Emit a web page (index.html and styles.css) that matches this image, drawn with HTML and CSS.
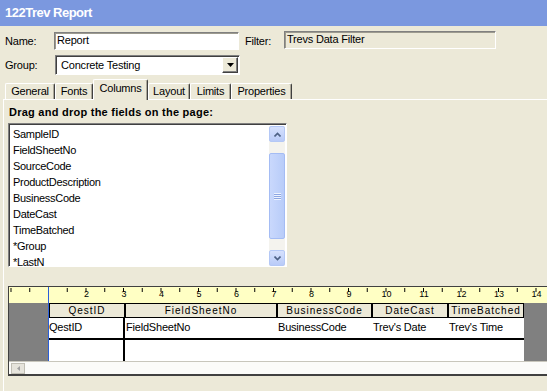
FILE: index.html
```html
<!DOCTYPE html>
<html>
<head>
<meta charset="utf-8">
<link rel="stylesheet" href="styles.css">
</head>
<body>
<div class="window">
  <div class="titlebar">122Trev Report</div>
  <div class="row row-name">
    <span class="lbl lbl-name">Name:</span>
    <div class="field field-name">Report</div>
    <span class="lbl lbl-filter">Filter:</span>
    <div class="field field-filter">Trevs Data Filter</div>
  </div>
  <div class="row row-group">
    <span class="lbl lbl-group">Group:</span>
    <div class="combo">
      <span class="combo-text">Concrete Testing</span>
      <span class="combo-btn"><svg width="7" height="4" viewBox="0 0 7 4"><path d="M0 0h7L3.5 4z" fill="#000"/></svg></span>
    </div>
  </div>
  <div class="tabs">
    <div class="tab t-general">General</div>
    <div class="tab t-fonts">Fonts</div>
    <div class="tab t-columns active">Columns</div>
    <div class="tab t-layout">Layout</div>
    <div class="tab t-limits">Limits</div>
    <div class="tab t-props">Properties</div>
  </div>
  <div class="panel">
    <div class="caption">Drag and drop the fields on the page:</div>
    <div class="listbox">
      <div class="items">
        <div class="item">SampleID</div>
        <div class="item">FieldSheetNo</div>
        <div class="item">SourceCode</div>
        <div class="item">ProductDescription</div>
        <div class="item">BusinessCode</div>
        <div class="item">DateCast</div>
        <div class="item">TimeBatched</div>
        <div class="item">*Group</div>
        <div class="item">*LastN</div>
      </div>
      <div class="vscroll">
        <div class="xpbtn up"><svg width="7" height="5" viewBox="0 0 7 5"><path d="M0.5 4.5L3.5 1.5L6.5 4.5" fill="none" stroke="#4d6185" stroke-width="1.6"/></svg></div>
        <div class="track-gap1"></div>
        <div class="thumb"><span class="grip"></span></div>
        <div class="track-gap2"></div>
        <div class="xpbtn down"><svg width="7" height="5" viewBox="0 0 7 5"><path d="M0.5 0.5L3.5 3.5L6.5 0.5" fill="none" stroke="#4d6185" stroke-width="1.6"/></svg></div>
      </div>
    </div>
    <div class="designer">
      <div class="ruler">
        <div class="ruler-left"></div>
        <div class="ruler-right">
          <span class="num">2</span><span class="num">3</span><span class="num">4</span><span class="num">5</span><span class="num">6</span><span class="num">7</span><span class="num">8</span><span class="num">9</span><span class="num">10</span><span class="num">11</span><span class="num">12</span><span class="num">13</span><span class="num">14</span>
        </div>
      </div>
      <div class="page">
        <div class="gutter"></div>
        <div class="grid">
          <div class="hcell c1">QestID</div>
          <div class="hcell c2">FieldSheetNo</div>
          <div class="hcell c3">BusinessCode</div>
          <div class="hcell c4">DateCast</div>
          <div class="hcell c5">TimeBatched</div>
          <div class="dcell c1 sep">QestID</div>
          <div class="dcell c2">FieldSheetNo</div>
          <div class="dcell c3">BusinessCode</div>
          <div class="dcell c4">Trev's Date</div>
          <div class="dcell c5">Trev's Time</div>
          <div class="ecell c1 sep"></div>
          <div class="ecell wide"></div>
        </div>
        <div class="rest"></div>
      </div>
      <div class="hscroll">
        <div class="hbtn"><svg width="3" height="5" viewBox="0 0 3 5"><path d="M3 0v5L0 2.5z" fill="#a0a0a0"/></svg></div>
      </div>
    </div>
  </div>
</div>
</body>
</html>
```
FILE: styles.css
```css
html, body {
  margin: 0;
  padding: 0;
}
body {
  width: 547px;
  height: 391px;
  overflow: hidden;
  background: #ece9d8;
  font-family: "Liberation Sans", Arial, sans-serif;
  font-size: 11px;
  color: #000;
}
.window {
  width: 547px;
  height: 391px;
  overflow: hidden;
}
.titlebar {
  height: 26px;
  background: #7b98df;
  color: #fff;
  font-weight: bold;
  font-size: 13px;
  letter-spacing: -0.5px;
  line-height: 26px;
  padding-left: 5px;
  box-sizing: border-box;
}
.row {
  display: flex;
  align-items: center;
  height: 18px;
}
.row-name {
  margin-top: 6px;
}
.row-group {
  margin-top: 5px;
  height: 20px;
}
.lbl {
  letter-spacing: -0.2px;
}
.lbl-name {
  width: 54px;
  padding-left: 5px;
  box-sizing: border-box;
}
.lbl-group {
  width: 50px;
  padding-left: 5px;
  box-sizing: border-box;
}
.lbl-filter {
  margin-left: 6px;
  width: 39px;
}
.field {
  height: 18px;
  box-sizing: border-box;
  border: 1px solid;
  border-color: #808080 #fff #fff #808080;
  box-shadow: inset 1px 1px 0 #9d9b8f;
  line-height: 15px;
  padding-left: 2px;
  letter-spacing: -0.2px;
}
.field-name {
  width: 185px;
  background: #fff;
}
.field-filter {
  width: 212px;
  background: #ece9d8;
  margin-top: -2px;
}
.combo {
  width: 185px;
  height: 20px;
  margin-left: 5px;
  box-sizing: border-box;
  border: 1px solid;
  border-color: #808080 #fff #fff #808080;
  box-shadow: inset 1px 1px 0 #404040;
  background: #fff;
  display: flex;
  align-items: center;
}
.combo-text {
  flex: 1;
  padding-left: 5px;
  letter-spacing: -0.2px;
}
.combo-btn {
  width: 16px;
  height: 16px;
  margin-right: 1px;
  box-sizing: border-box;
  background: #ece9d8;
  border: 1px solid;
  border-color: #fff #404040 #404040 #fff;
  box-shadow: inset -1px -1px 0 #808080;
  display: flex;
  align-items: center;
  justify-content: center;
}
.tabs {
  display: flex;
  align-items: flex-end;
  height: 20px;
  margin-top: 4px;
  padding-left: 5px;
}
.tab {
  height: 16px;
  box-sizing: border-box;
  border-top: 1px solid #fff;
  border-left: 1px solid #fff;
  border-right: 1px solid #404040;
  box-shadow: inset -1px 0 0 #aca899;
  border-radius: 2px 2px 0 0;
  line-height: 15px;
  text-align: center;
  letter-spacing: -0.2px;
}
.tab.active {
  height: 21px;
  margin-bottom: -1px;
  line-height: 17px;
  background: #ece9d8;
  position: relative;
  z-index: 1;
}
.t-general { width: 50px; }
.t-fonts { width: 38px; }
.t-columns { width: 55px; }
.t-layout { width: 42px; }
.t-limits { width: 41px; }
.t-props { width: 61px; }
.panel {
  margin-left: 3px;
  width: 600px;
  height: 300px;
  border-top: 1px solid #fff;
  border-left: 1px solid #fff;
  padding-left: 4px;
  box-sizing: border-box;
}
.caption {
  margin-top: 6px;
  font-weight: bold;
  letter-spacing: 0.25px;
  line-height: 13px;
  padding-left: 1px;
}
.listbox {
  margin-top: 4px;
  width: 279px;
  height: 144px;
  box-sizing: border-box;
  border: 1px solid;
  border-color: #808080 #fff #fff #808080;
  box-shadow: inset 1px 1px 0 #404040;
  background: #fff;
  display: flex;
  padding: 2px 0 0 2px;
}
.items {
  flex: 1;
}
.item {
  height: 16px;
  line-height: 16px;
  padding-left: 2px;
  letter-spacing: -0.3px;
}
.vscroll {
  width: 16px;
  margin-right: 1px;
  background: #f4f3ee;
  display: flex;
  flex-direction: column;
}
.xpbtn {
  height: 16px;
  box-sizing: border-box;
  border: 1px solid #b4c8f6;
  border-radius: 2px;
  background: linear-gradient(to bottom, #d6e1fd, #b9cbf8);
  display: flex;
  align-items: center;
  justify-content: center;
}
.track-gap1 { height: 11px; }
.track-gap2 { height: 11px; }
.thumb {
  height: 86px;
  box-sizing: border-box;
  border: 1px solid #a4bcf4;
  border-radius: 2px;
  background: linear-gradient(to right, #c9d8fc, #b8ccf9);
  display: flex;
  align-items: center;
  justify-content: center;
}
.grip {
  width: 7px;
  height: 7px;
  background: repeating-linear-gradient(to bottom, #eef3fe 0 1px, #8ca6e3 1px 2px);
}
.designer {
  margin-top: 19px;
  width: 560px;
  border-top: 1px solid #404040;
  border-left: 1px solid #404040;
  border-bottom: 2px solid #404040;
}
.ruler {
  display: flex;
  height: 16px;
  background-color: #ffffc4;
  background-image: linear-gradient(to right, #000 1px, transparent 1px);
  background-size: 18.75px 4px;
  background-repeat: repeat-x;
  background-position: 1.5px 1px;
}
.ruler-left {
  width: 39px;
  flex: none;
}
.ruler-right {
  border-left: 1px solid #2b5fd9;
  display: flex;
  padding-left: 18.75px;
  font-size: 9px;
  line-height: 12px;
  padding-top: 1px;
  white-space: nowrap;
}
.num {
  width: 37.5px;
  flex: none;
  text-align: center;
}
.page {
  display: flex;
  height: 58px;
}
.gutter {
  width: 39px;
  flex: none;
  background: #808080;
  border-right: 1px solid #2b5fd9;
}
.grid {
  width: 475px;
  flex: none;
  display: grid;
  grid-template-columns: 76px 152px 95px 76px 76px;
  grid-template-rows: 15px 22px 21px;
  background: #fff;
}
.hcell {
  background: #ece9d8;
  border: 1px solid #000;
  text-align: center;
  line-height: 13px;
  font-size: 10px;
  letter-spacing: 1px;
}
.dcell {
  line-height: 19px;
  border-bottom: 2px solid #000;
  letter-spacing: -0.2px;
  padding-left: 1px;
}
.dcell.c1 { padding-left: 0; }
.dcell.c2 { padding-left: 1px; }
.sep {
  border-right: 2px solid #000;
}
.ecell.wide {
  grid-column: 2 / 6;
}
.rest {
  flex: 1;
  background: #808080;
}
.hscroll {
  height: 13px;
  box-sizing: border-box;
  background: #fbfbf9;
  border-top: 1px solid #c8c6bc;
  display: flex;
  align-items: center;
  padding-left: 2px;
}
.hbtn {
  width: 14px;
  height: 11px;
  box-sizing: border-box;
  background: #e6e4dc;
  border: 1px solid #c0beb4;
  display: flex;
  align-items: center;
  justify-content: center;
}
```
